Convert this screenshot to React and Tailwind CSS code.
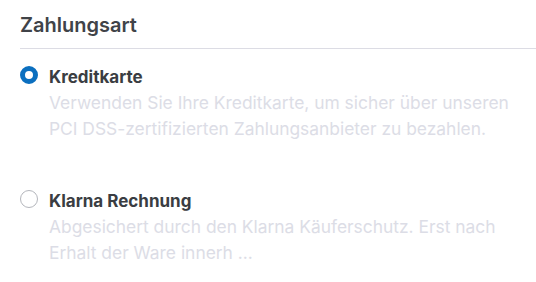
import React from 'react';

const options = [
  {
    id: 'card',
    label: 'Kreditkarte',
    text: 'Verwenden Sie Ihre Kreditkarte, um sicher über unseren PCI DSS-zertifizierten Zahlungsanbieter zu bezahlen.',
    checked: true,
  },
  {
    id: 'klarna',
    label: 'Klarna Rechnung',
    text: 'Abgesichert durch den Klarna Käuferschutz. Erst nach Erhalt der Ware innerh ...',
    checked: false,
  },
];

const Radio = ({ checked }) => (
  <span
    className={`mt-px block h-[18px] w-[18px] flex-shrink-0 rounded-full bg-white ${
      checked ? 'border-[5px] border-[#0b6fbf]' : 'border border-[#b4b6bc]'
    }`}
  />
);

export default function App() {
  return (
    <div className="min-h-screen bg-white pl-5 pt-[11px] font-['Inter',sans-serif]">
      <h2 className="text-[20px] font-semibold leading-7 text-[#404348]">Zahlungsart</h2>
      <div className="mt-[9px] h-px bg-[#dcdce4]" />

      <div className="mt-4 flex flex-col gap-[47px] pr-4">
        {options.map((opt) => (
          <label key={opt.id} className="flex gap-[11px]">
            <Radio checked={opt.checked} />
            <div>
              <div className="text-[17px] font-bold leading-6 text-[#3a3d42]">{opt.label}</div>
              <p className="mt-px text-[17.4px] leading-[26px] text-[#dcdde6]">{opt.text}</p>
            </div>
          </label>
        ))}
      </div>
    </div>
  );
}
